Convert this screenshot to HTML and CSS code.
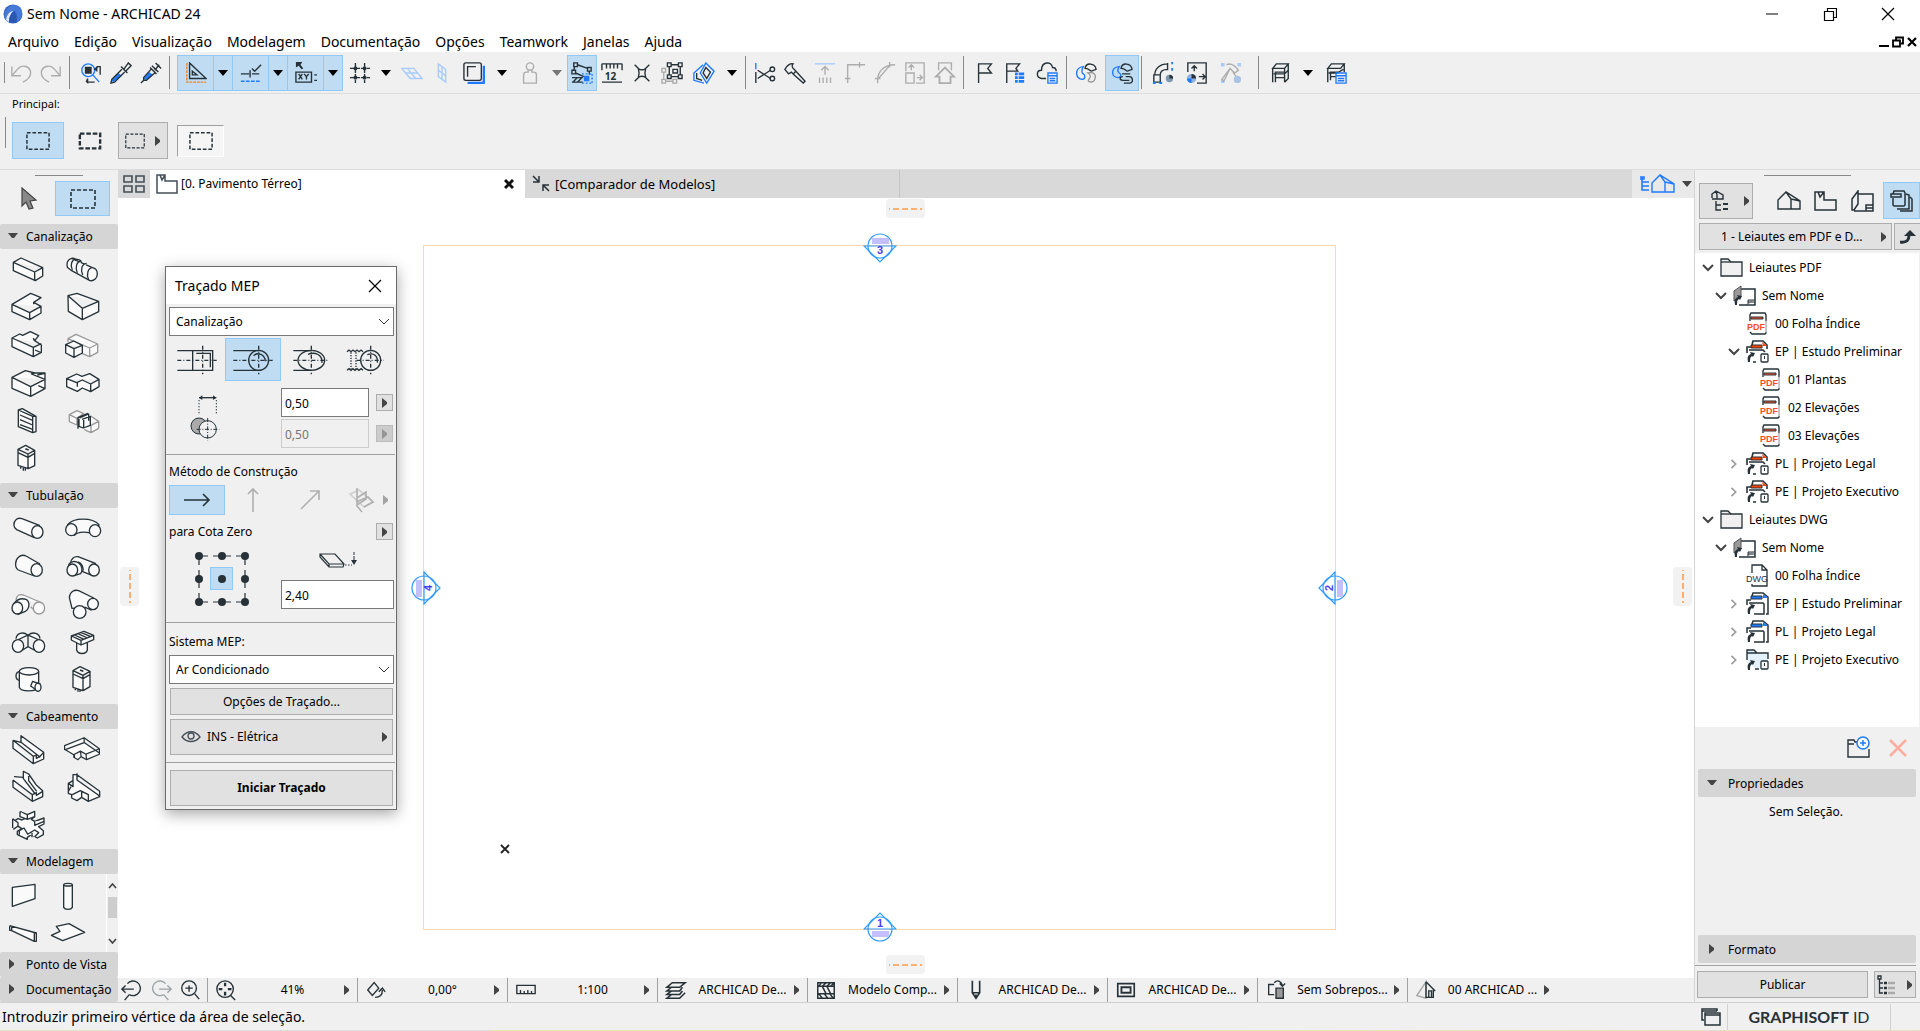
FILE: index.html
```html
<!DOCTYPE html>
<html lang="pt-BR">
<head>
<meta charset="utf-8">
<title>Sem Nome - ARCHICAD 24</title>
<link rel="stylesheet" href="styles.css">
</head>
<body>
<svg class="defs" aria-hidden="true">
  <defs>
    <symbol id="caret" viewBox="0 0 10 6"><path d="M0 0h10L5 6z" fill="currentColor"/></symbol>
    <symbol id="tri" viewBox="0 0 6 10"><path d="M0 0v10l5-4V4z" fill="#444"/></symbol>
    <symbol id="tri-down" viewBox="0 0 10 6"><path d="M0 0h10L6 5H4z" fill="#444"/></symbol>
    <symbol id="marquee" viewBox="0 0 26 20"><path d="M1 1h24v18H1z" fill="none" stroke="#263238" stroke-width="1.600" stroke-dasharray="4 2"/></symbol>
    <symbol id="chev-down" viewBox="0 0 12 8"><path d="M1 1l5 5 5-5" fill="none" stroke="#444" stroke-width="2"/></symbol>
    <symbol id="chev-right" viewBox="0 0 8 12"><path d="M1 1l5 5-5 5" fill="none" stroke="#9a9a9a" stroke-width="2"/></symbol>
    <symbol id="house" viewBox="0 0 24 20"><path d="M1 18V9l8-8 14 9v8zM9 1l5 7v10M14 8l9 2" fill="none" stroke="currentColor" stroke-width="1.400"/></symbol>
    <symbol id="folder" viewBox="0 0 24 20"><path d="M1 18V1h7l3 3h11v14z" fill="#f0f0f0" stroke="#263238" stroke-width="1.300"/><path d="M1 4h10" stroke="#263238" stroke-width="1.300"/></symbol>
    <symbol id="layout-book" viewBox="0 0 24 22"><path d="M8 4h14v16H6" fill="none" stroke="#263238" stroke-width="1.500"/><path d="M1 6l7-5v11l-7 4z" fill="#999" stroke="#555"/><path d="M15 20v-5h7M15 17h7" fill="#ccc" stroke="#263238"/><path d="M2 20c-1-5 0-7 3-8l-1-2 5 1-2 4-1-1c-2 1-2 3-2 6z" fill="#263238"/></symbol>
    <symbol id="pdf" viewBox="0 0 24 24"><path d="M4 9V3l1-2h14l1 2v6M20 20v1l-1 1H6l-2-2" fill="none" stroke="#263238" stroke-width="1.400"/><path d="M20 8v13" stroke="#8a9094"/><path d="M5 5h12v2H5z" fill="#fc4c26" stroke="#263238"/><text x="1" y="18" class="ico-text" fill="#fc4c26">PDF</text></symbol>
    <symbol id="dwg" viewBox="0 0 24 24"><path d="M6 9V1h10l5 5v16H6v-2M16 1v5h5" fill="none" stroke="#263238" stroke-width="1.300"/><text x="0" y="18" class="ico-text ico-dwg" fill="#263238">DWG</text></symbol>
    <symbol id="pub-pdf" viewBox="0 0 24 24"><path d="M6 5l1-4h10l4 4v4M1 13V7h4M3 10h14l2 2M10 22h-3" fill="none" stroke="#263238" stroke-width="1.600"/><path d="M5 5h11v3H5z" fill="#fc4000" stroke="#263238"/><path d="M16 2l5 4h-4z" fill="#fc4000"/><rect x="15" y="14" width="7" height="8" rx="1" fill="#fff" stroke="#263238" stroke-width="1.300"/><path d="M18.500 16v3" stroke="#263238"/><path d="M2 22c-1-5 0-7 3-8l-1-2 5 1-2 4-1-1c-2 1-2 3-2 6z" fill="#263238"/></symbol>
    <symbol id="pub-dwg" viewBox="0 0 24 24"><path d="M6 4l1-3h10l5 4v17h-2M1 13V8h4M3 11h14l1 1v10H8" fill="none" stroke="#263238" stroke-width="1.500"/><path d="M5 4h11v3H5z" fill="#1e7bff" stroke="#263238"/><path d="M17 2l4 3v1h-4z" fill="#1e7bff"/><path d="M2 22c-1-5 0-7 3-8l-1-2 5 1-2 4-1-1c-2 1-2 3-2 6z" fill="#263238"/></symbol>
    <symbol id="pub-folder" viewBox="0 0 24 24"><path d="M1 14V2h7l3 3h11v9l-8 6H9z" fill="#e3f1fd"/><path d="M1 12V2h7l3 3h11v6M9 21h4M1 5h10" fill="none" stroke="#263238" stroke-width="1.400"/><rect x="15" y="13" width="7" height="8" rx="1" fill="#fff" stroke="#263238" stroke-width="1.300"/><path d="M18.500 15v3" stroke="#263238"/><path d="M2 22c-1-5 0-7 3-8l-1-2 5 1-2 4-1-1c-2 1-2 3-2 6z" fill="#263238"/></symbol>
  </defs>
</svg>

<header class="titlebar">
  <svg class="logo" viewBox="0 0 20 20"><circle cx="10" cy="10" r="9.500" fill="#2f62c4"/><path d="M1 13C1 6 6 1 11 1c6 0 8 4 8 8 0 4-2 7-5 9 1-7-1-11-3-11-4 0-7 5-8 9z" fill="#4779d6"/><path d="M3 16c1-6 4-9 8-9-3 2-5 6-5 11z" fill="#dfe9fb"/><path d="M6 18c0-5 2-9 5-11 2 2 3 6 2 11-2 1-5 1-7 0z" fill="#2a57b0"/></svg>
  <span class="title">Sem Nome - ARCHICAD 24</span>
  <div class="winctl">
    <button aria-label="Minimizar"><svg width="14" height="14"><path d="M1 7h12" stroke="#000"/></svg></button>
    <button aria-label="Restaurar"><svg width="14" height="14"><path d="M1.500 4.500h9v9h-9zM4.500 4V1.500h9v9H11" fill="none" stroke="#000" stroke-width="1.200"/></svg></button>
    <button aria-label="Fechar"><svg width="14" height="14"><path d="M1 1l12 12M13 1L1 13" stroke="#000" stroke-width="1.200"/></svg></button>
  </div>
</header>
<nav class="menubar">
  <a href="#">Arquivo</a><a href="#">Edição</a><a href="#">Visualização</a><a href="#">Modelagem</a><a href="#">Documentação</a><a href="#">Opções</a><a href="#">Teamwork</a><a href="#">Janelas</a><a href="#">Ajuda</a>
  <div class="docctl">
    <svg width="10" height="12"><path d="M0 10h10" stroke="#000" stroke-width="2"/></svg>
    <svg width="12" height="12"><path d="M1 4.500h7v6H1zM4 4V1.500h7v6H9" fill="none" stroke="#000" stroke-width="1.800"/></svg>
    <svg width="10" height="12"><path d="M1 2l8 8M9 2l-8 8" stroke="#000" stroke-width="2.200"/></svg>
  </div>
</nav>

<div class="toolbar">
  <i class="sep first"></i>
  <button class="tb dim" aria-label="Desfazer"><svg viewBox="0 0 24 24"><path d="M2 5v10h10M2 15L9 7c4-4 11-3 13 2 2 6-2 10-8 13"/></svg></button>
  <button class="tb dim" aria-label="Refazer"><svg viewBox="0 0 24 24"><path d="M22 5v10H12M22 15l-7-8C11 3 4 4 2 9c-2 6 2 10 8 13"/></svg></button>
  <i class="sep"></i>
  <button class="tb" aria-label="Localizar e selecionar"><svg viewBox="0 0 24 24"><circle cx="9" cy="9" r="7" class="b"/><path d="M14 14l7 8" class="b"/><path d="M6 6h6v6H6z" class="f"/><path d="M17 8l2-3h3v9M8 18v4h8"/><path d="M15 8l4-4v7zM6 21l3-3v6z" class="f" stroke="none"/></svg></button>
  <button class="tb" aria-label="Conta-gotas"><svg viewBox="0 0 24 24"><path d="M9 12L2 20l1 2 2-1 8-6z" class="bf"/><path d="M13 8L2 19l-1 4 4-1L16 11M12 5l7 7M15 8l5-7 3 3-6 6z"/></svg></button>
  <button class="tb" aria-label="Seringa"><svg viewBox="0 0 24 24"><path d="M10 11l-6 7 2 2 8-6z" class="bf"/><path d="M12 8L4 17v3h3l9-8M1 23l4-4M11 6l7 7M16 9l5-6M17 1l6 6M13 4l7 7"/></svg></button>
  <i class="sep"></i>
  <div class="toggles">
    <button class="on" aria-label="Linhas guia"><svg viewBox="0 0 24 24"><path d="M5 1v17h18z M8 10v4h5z"/><path d="M2 1v21h21" stroke="#f58220" stroke-dasharray="3 1"/></svg></button><button class="on car" aria-label="Opções"><svg class="caret"><use href="#caret"/></svg></button>
    <button class="on" aria-label="Guias de ajuste"><svg viewBox="0 0 24 24"><path d="M1 13h9M13 13h8M11 9v8M13 7l3 3 7-7"/><path d="M1 21h22" class="b" stroke-dasharray="4 1.500"/></svg></button><button class="on car" aria-label="Opções"><svg class="caret"><use href="#caret"/></svg></button>
    <button class="on" aria-label="Coordenadas"><svg viewBox="0 0 24 24"><path d="M1 0h7L6 3l3 4-2 1-3-4-3 2z" class="f" stroke="none"/><path d="M1 11h17v11H1zM21 14h3M21 20h3"/><path d="M4 13l4 6M8 13l-4 6M10 13l2.500 3 2.500-3M12.500 16v3"/></svg></button><button class="on car" aria-label="Opções"><svg class="caret"><use href="#caret"/></svg></button>
  </div>
  <button class="tb" aria-label="Grade"><svg viewBox="0 0 24 24"><path d="M7 1v22M17 1v22M1 7h22M1 17h22" stroke-dasharray="5 1"/><path d="M6 6h2v2H6zM16 6h2v2h-2zM6 16h2v2H6zM16 16h2v2h-2z" class="f"/></svg></button>
  <button class="car" aria-label="Opções da grade"><svg class="caret"><use href="#caret"/></svg></button>
  <button class="tb pale" aria-label="Plano de edição"><svg viewBox="0 0 24 24"><path d="M1 7h13l9 11H10zM7 7l9 11M5 12h13"/></svg></button>
  <button class="tb pale" aria-label="Plano vertical"><svg viewBox="0 0 24 24"><path d="M8 2l8 6v14l-8-6zM12 5v14M8 9l8 6"/></svg></button>
  <button class="tb wide" aria-label="Rastrear"><svg viewBox="0 0 24 24"><path d="M5 23h16a2 2 0 002-2V4" class="b w"/><rect x="1" y="1" width="19" height="19" rx="2"/><path d="M5 16V5h9"/></svg></button>
  <button class="car" aria-label="Opções de rastreio"><svg class="caret"><use href="#caret"/></svg></button>
  <button class="tb wide dim" aria-label="Gravidade"><svg viewBox="0 0 24 24"><circle cx="12" cy="5" r="4"/><path d="M10 9v2H8c-2 0-3 1-3 3v9h14v-9c0-2-1-3-3-3h-2V9"/></svg></button>
  <button class="car gray" aria-label="Opções de gravidade"><svg class="caret"><use href="#caret"/></svg></button>
  <button class="tb on" aria-label="Suspender grupos"><svg viewBox="0 0 24 24"><path d="M3 1h4v4H3zM18 6h4v4h-4zM1 9h4v4H1zM7 3l11 4M4 5L3 9M5 12l9 4M20 10v4M1 17h12M1 22h12M2 22l5-5M7 22l5-5"/><path d="M14 15h6v6h-6z" class="bf"/><path d="M12 13h11M23 13v10M12 23h11" class="b" stroke-dasharray="2 2"/></svg></button>
  <button class="tb" aria-label="Medir"><svg viewBox="0 0 24 24"><path d="M1 2h22M1 22h22M1 2v7M6 2v5M10 2v5M14 2v5M18 2v5M23 2v7"/><text x="4" y="20" class="num">12</text></svg></button>
  <button class="tb" aria-label="Interseção"><svg viewBox="0 0 24 24"><path d="M4 3l5 5M20 3l-5 5M4 21l5-5M20 21l-5-5M8 7c2 2 6 2 8 0-1 3-1 7 0 10-2-2-6-2-8 0 1-3 1-7 0-10z"/></svg></button>
  <button class="tb" aria-label="Editar grupo"><svg viewBox="0 0 24 24"><path d="M3 11v7M5 21h8M1 7h4v4H1zM1 19h4v4H1zM13 19h4v4h-4z" stroke="#aaa"/><path d="M7 1h4v4H7zM19 1h4v4h-4zM7 14h4v4H7zM19 14h4v4h-4zM11 3h8M9 5v9M21 5v9M11 16h8M13 8h5v4h-5z"/></svg></button>
  <button class="tb wide" aria-label="Plano de corte"><svg viewBox="0 0 24 24"><path d="M11 3L1 12v8l11 3M14 1l9 9-8 13-7-11z" class="b"/><path d="M14 6l5 5-4 7-4-6zM4 12v6l6 2"/></svg></button>
  <button class="car" aria-label="Opções do plano"><svg class="caret"><use href="#caret"/></svg></button>
  <i class="sep tight"></i>
  <button class="tb" aria-label="Dividir"><svg viewBox="0 0 24 24"><path d="M2 1v7" class="b"/><path d="M2 11v12M4 9l14 9M4 18l14-9"/><circle cx="20" cy="8" r="2.500"/><circle cx="20" cy="18" r="2.500"/></svg></button>
  <button class="tb" aria-label="Ajustar"><svg viewBox="0 0 24 24"><path d="M1 8c2-4 6-7 9-6-2 2-1 4 1 6l2 2-3 3-2-2-3 2zM13 10l10 11-2 2-11-10"/></svg></button>
  <button class="tb dim" aria-label="Elevar"><svg viewBox="0 0 24 24"><path d="M1 2h22" stroke="#a9cbfa"/><path d="M12 14V5M8 9l4-4 4 4M6 17v6M10 17v6M14 17v6M18 17v6"/></svg></button>
  <button class="tb dim" aria-label="Concordar"><svg viewBox="0 0 24 24"><path d="M4 23V3h19M17 0v6M1 18h6"/></svg></button>
  <button class="tb dim" aria-label="Arco"><svg viewBox="0 0 24 24"><path d="M4 23C3 12 9 3 23 3M5 18L17 4M17 0v6M1 18h6"/></svg></button>
  <button class="tb dim" aria-label="Redimensionar"><svg viewBox="0 0 24 24"><path d="M2 10V1h20v22H13M2 12h9v11H2zM8 9V4M5 6l3-3 3 3M14 17h6M17 14l3 3-3 3"/></svg></button>
  <button class="tb dim" aria-label="Recortar ao telhado"><svg viewBox="0 0 24 24"><path d="M2 16L12 6l10 10h-4v7H6v-7z" stroke-width="2"/><path d="M5 9V1h14v8"/></svg></button>
  <i class="sep"></i>
  <button class="tb" aria-label="Marcador"><svg viewBox="0 0 24 24"><path d="M5 23V2h14l-4 5 4 5H5"/></svg></button>
  <button class="tb" aria-label="Lista de marcadores"><svg viewBox="0 0 24 24"><path d="M3 23V2h14l-4 5 2 3H3"/><path d="M12 13h10M12 17h10M12 21h10" class="b w" stroke-dasharray="3 1 7 0"/></svg></button>
  <button class="tb wide" aria-label="BIMcloud"><svg viewBox="0 0 24 24"><path d="M11 18H6c-6-1-6-9 0-9C6-1 17-1 18 6c3 0 4 2 4 4"/><path d="M13 12h10v11H13zM13 15h10M15 18h6M15 20.500h6" class="b"/></svg></button>
  <i class="sep tight"></i>
  <button class="tb" aria-label="Modelo MEP"><svg viewBox="0 0 24 24"><path d="M9 5c-10 1-9 14-1 14 4-1 3-5 1-6-3-2 0-8 0-8z" class="b"/><path d="M11 7c1-7 11-6 12 1l-5 2c-2 0-2-3-7-3z"/><path d="M14 12c7-2 10 3 7 8-2 3-8 2-6-1 2-2 3-5-1-7z" stroke="#999"/></svg></button>
  <button class="tb wide on lead" aria-label="Rotas MEP"><svg viewBox="0 0 24 24"><path d="M9 5C-1 6 0 17 8 17c4-1 3-4 1-5-3-2 0-7 0-7z" class="b"/><path d="M11 7c1-7 11-6 12 1l-5 2c-2 0-2-3-7-3zM12 13h9M13 16c-4 0-4 4 0 4h7M14 23h6c5 0 4-7 0-7h-4"/></svg></button>
  <i class="sep tight"></i>
  <button class="tb wide" aria-label="Curva MEP"><svg viewBox="0 0 24 24"><path d="M3 14C3 7 9 2 17 2M9 14c0-4 3-6 8-6M2 14h7v8H2zM17 1v8"/><path d="M21 1h2M21 8h2M1 23h3M8 23h3" class="b w"/><circle cx="19" cy="18" r="4" fill="#7f98ad" stroke="none"/><path d="M19 14a4 4 0 014 4h-4z" class="f" stroke="none"/></svg></button>
  <button class="tb wide" aria-label="Redimensionar MEP"><svg viewBox="0 0 24 24"><path d="M2 11V1h20v22H12M9 10V4M6 7l3-3 3 3M14 16h7M18 13l3 3-3 3"/><circle cx="6" cy="18" r="5" fill="#8fb3dc" stroke="none"/><path d="M1 18a5 5 0 005 5v-5z" class="bf"/><path d="M6 13a5 5 0 015 5H6z" class="f" stroke="none"/></svg></button>
  <button class="tb wide dim" aria-label="Reparar MEP"><svg viewBox="0 0 24 24"><path d="M1 1h4v4H1zM19 1h4v4h-4zM1 19h4v4H1z" fill="#a9cbfa" stroke="none"/><path d="M7 3c4-2 8-1 13 6l-4 3-5-5L4 21l-2-2L11 7M14 11l6 8"/><circle cx="19" cy="19" r="4" fill="#a9c3e6" stroke="none"/></svg></button>
  <i class="sep loose"></i>
  <button class="tb wide" aria-label="Biblioteca"><svg viewBox="0 0 24 24"><path d="M4 7l4-5h13l-4 5zM4 7v15M7 22V11h10v11M17 7v4M21 2v16l-4 4M5 13h12l4-4M7 17h10"/></svg></button>
  <button class="car" aria-label="Opções da biblioteca"><svg class="caret"><use href="#caret"/></svg></button>
  <button class="tb wide" aria-label="Lista da biblioteca"><svg viewBox="0 0 24 24"><path d="M3 7l4-5h14l-4 5zM3 7v15M6 20V11h8M21 2v9M4 12h9l7-4M6 16h6"/><path d="M12 12h11v11H12zM12 15h11M14 18h7M14 20.500h7" class="b"/></svg></button>
</div>

<section class="infobox">
  <p>Principal:</p>
  <div class="inforow">
    <i class="sep"></i>
    <button class="ib on" aria-label="Marquise simples"><svg><use href="#marquee"/></svg></button>
    <button class="ib bold" aria-label="Marquise espessa"><svg viewBox="0 0 26 20"><path d="M2 2h22v16H2z" fill="none" stroke="#263238" stroke-width="2.600" stroke-dasharray="5 2"/></svg></button>
    <button class="ib raised" aria-label="Método"><svg class="sm"><use href="#marquee"/></svg><svg class="tri"><use href="#tri"/></svg></button>
    <button class="ib inset" aria-label="Geometria"><svg><use href="#marquee"/></svg></button>
  </div>
</section>

<div class="work">
  <aside class="toolbox">
    <i class="grip"></i>
    <div class="pick">
      <button aria-label="Seta"><svg width="18" height="24" viewBox="0 0 18 24"><path d="M2 1l14 12-6 1 3 7-4 1-3-7-4 4z" fill="#888" stroke="#444" stroke-width="1.200"/></svg></button>
      <button class="on" aria-label="Marquise"><svg width="26" height="20"><use href="#marquee"/></svg></button>
    </div>
    <h2><svg class="td"><use href="#tri-down"/></svg>Canalização</h2>
    <div class="tools">
      <button aria-label="Duto"><svg viewBox="30 279 108 96"><path d="M40 307l23-13 65 29v25l-22 14-66-30zM40 307l64 29 24-13M104 336v26"/></svg></button>
      <button aria-label="Duto flexível"><svg viewBox="192 279 108 96"><path d="M215 295c-12 3-17 15-13 27l13 10 55 30c12 2 22-8 22-20 0-10-5-17-15-19z"/><path d="M229 297c-15 2-19 19-12 33M244 303c-15 2-19 19-12 35M260 310c-15 2-19 19-12 35M278 323c-14 0-20 20-12 37M215 295c9-1 12 2 14 8M229 298c9 0 13 2 15 8"/></svg></button>
      <button aria-label="Curva de duto"><svg viewBox="30 393 108 96"><path d="M36 433l56-33 31 13-22 14 22 12v20l-34 20-53-24zM36 433l53 25 34-19M89 458v21M101 427v6"/></svg></button>
      <button aria-label="Transição"><svg viewBox="192 393 108 96"><path d="M204 407l27-7 65 24v31l-49 24-42-25zM204 407l43 38 49-21M247 445v34"/></svg></button>
      <button aria-label="Derivação"><svg viewBox="30 507 108 96"><path d="M36 534l23-12 9 4 23-11 25 12-12 15 20 13v22l-24 13-64-30zM36 534l64 28 24-11M100 562v28M105 570l18 8M100 534l3 8"/></svg></button>
      <button aria-label="Ramal"><svg viewBox="192 507 108 96"><path d="M204 536l24-13 65 29v25l-24 13-24-10M269 590v-26l24-12M269 564l-65-28v10" stroke="#999"/><path d="M197 554l24-11 26 13v23l-25 13-25-13zM197 554l25 12 25-10M222 566v26"/></svg></button>
      <button aria-label="Bifurcação"><svg viewBox="30 621 108 96"><path d="M36 652l40-20 28 7h31v47l-43 23-56-24zM36 652l56 28 43-22M92 680v29M104 639l-10 3 41 16M112 645l23-5M135 686l-20-9"/></svg></button>
      <button aria-label="Desvio"><svg viewBox="192 621 108 96"><path d="M200 656l30-14 16 7 23-8 28 17v22l-25 15-25-11-15 10-32-14zM200 656l30 12 17-8 25 12 25-14M272 672v25M232 668v12"/></svg></button>
      <button aria-label="Terminal"><svg viewBox="30 735 108 96"><path d="M55 750l12-4 41 23v46l-10 3-43-18zM55 750l43 19 10 0M98 769v49M60 765l38 16M60 779l38 16M60 794l38 14"/></svg></button>
      <button aria-label="Acessório em linha"><svg viewBox="192 735 108 96"><path d="M208 764l23-12 20 9-20 14v20l-23-10zM208 764l23 11M272 768l24 16v21l-23 13-20-9M273 795v23M253 788l20 8 23-12" stroke="#999"/><path d="M234 806v-33l30-13M239 774l27-12v20M246 778l25-9v27l-21 8-13-5v-23M251 780v24" stroke-width="4"/></svg></button>
      <button aria-label="Equipamento"><svg viewBox="30 849 108 96"><path d="M54 868l23-12 27 15v46l-19 9-31-10zM54 868l30 14 20-11M84 882v43M54 878l30 14 20-12M62 918v8M70 922v10M76 924v8"/><path d="M76 866l10 4" stroke-width="5"/></svg></button>
    </div>
    <h2><svg class="td"><use href="#tri-down"/></svg>Tubulação</h2>
    <div class="tools">
      <button aria-label="Tubo"><svg viewBox="30 1056 108 96"><path d="M103 1133l-53-24c-10-6-12-21-2-30 6-6 12-5 18-3l54 21"/><ellipse cx="112" cy="1116" rx="17" ry="19"/></svg></button>
      <button aria-label="Curva de tubo"><svg viewBox="192 1056 108 96"><path d="M203 1094c18-22 74-22 94 0l-14 32c-15-13-50-13-60 0z"/><ellipse cx="214" cy="1109" rx="17" ry="18"/><ellipse cx="285" cy="1112" rx="17" ry="18"/></svg></button>
      <button aria-label="Redução"><svg viewBox="30 1170 108 96"><path d="M103 1248l-48-18c-12-8-10-30 1-39 7-6 16-6 22-3l42 24"/><ellipse cx="110" cy="1230" rx="17" ry="19"/></svg></button>
      <button aria-label="Derivação de tubo"><svg viewBox="192 1170 108 96"><path d="M212 1210c0-14 12-22 22-20l52 20-8 37-30-12c4-12-2-26-14-29"/><path d="M206 1215c5-12 20-13 30-6s13 22 6 32l-20 6z"/><ellipse cx="217" cy="1230" rx="16" ry="18"/><ellipse cx="282" cy="1230" rx="16" ry="18"/></svg></button>
      <button aria-label="Ramal de tubo"><svg viewBox="30 -6 108 96"><path d="M48 30c2-14 10-19 22-15l50 21M92 50l22 21" stroke="#999"/><ellipse cx="117" cy="54" rx="17" ry="18" stroke="#999"/><path d="M44 38c10-12 24-13 34-10 12 6 12 28-2 36l-22 9z"/><ellipse cx="52" cy="54" rx="16" ry="18"/></svg></button>
      <button aria-label="Bifurcação de tubo"><svg viewBox="192 -6 108 96"><path d="M216 55l-8-33c2-18 16-24 28-20l45 22-8 36-17-8z"/><ellipse cx="279" cy="42" rx="16" ry="17"/><ellipse cx="239" cy="66" rx="19" ry="19"/></svg></button>
      <button aria-label="Cruzeta"><svg viewBox="30 108 108 96"><path d="M48 146c2-16 20-23 36-10 16-13 34-6 36 10M84 136v34M52 150l30-14M118 150l-32-14M68 180l16-10 18 10"/><ellipse cx="54" cy="168" rx="17" ry="19"/><ellipse cx="117" cy="168" rx="17" ry="19"/></svg></button>
      <button aria-label="Ralo"><svg viewBox="192 108 108 96"><path d="M230 158v22c4 14 28 14 32 0v-22z"/><path d="M214 138l38-14 29 12v13l-38 16-29-15zM214 138l29 13 38-15M243 151v14M224 135l28 13M234 131l28 13M244 128l28 12"/></svg></button>
      <button aria-label="Tanque"><svg viewBox="30 222 108 96"><path d="M60 244c-15 2-17 24 0 28"/><path d="M58 244v48c4 14 52 14 58 0v-48"/><ellipse cx="87" cy="244" rx="29" ry="11"/><path d="M92 288l6-14 22 8-6 22z"/><ellipse cx="114" cy="292" rx="9" ry="12"/></svg></button>
      <button aria-label="Equipamento hidráulico"><svg viewBox="192 222 108 96"><path d="M219 242l21-12 30 14v46l-21 12-30-10zM219 242l30 14 21-12M249 256v46M219 252l30 14 21-12M226 293v8M234 297v8M240 298v8"/><path d="M240 240l10 4" stroke-width="5"/></svg></button>
    </div>
    <h2><svg class="td"><use href="#tri-down"/></svg>Cabeamento</h2>
    <div class="tools">
      <button aria-label="Eletrocalha"><svg viewBox="30 429 108 96"><path d="M39 451v24l61 46 31-14v-20l-68-50v20l-24-6M39 451l61 48v22M63 457l58 45M100 499l9-4v10l12-7 10-11"/></svg></button>
      <button aria-label="Curva de eletrocalha"><svg viewBox="188 429 118 96"><path d="M190 466l64-26 50 36v18l-42 18-18-10-10 10-14-8v-8l-30-18zM190 466v14M254 440v16l50 34M190 480l64-24M304 476l-44 18-18-10-20 10v10M244 502l-2-18M262 512l-2-18"/></svg></button>
      <button aria-label="Redução de eletrocalha"><svg viewBox="30 543 108 96"><path d="M39 570v22l58 42 31-14v-18l-20-18-22-32-16-8v18l-28-2M39 570l58 44v20M70 552v14l36 46M86 558v14l24 32M97 614l12-6v8l19-12"/></svg></button>
      <button aria-label="Derivação de eletrocalha"><svg viewBox="192 543 108 96"><path d="M205 580l14-8v-18h12l68 50v16l-34 14-20-12-14 10-16-8v-10l-10-4zM231 550v20l68 48M205 580l14 10v-18M217 614l24-12 24 12v20M245 604v18M213 590l-8 14"/></svg></button>
      <button aria-label="Cruzeta de eletrocalha"><svg viewBox="30 657 108 96"><path d="M38 696l16-10 12 4 8-4-10-8V666l18 8 22-10v16l-10 8 10 6 28-10v18l-16 8 14 12v12l-18 10-18-10-12 8v6l-30-14v-10l14-8-20-12z"/><path d="M82 674v14l22-8M64 666l-4 0v14l22 8M104 694l0 12 28-12M38 686v28M38 686l16 12v10l-14 10M58 734l0-12 14-8 12 20M84 732l20-12 12 8-12 12M96 728v14"/></svg></button>
    </div>
    <h2><svg class="td"><use href="#tri-down"/></svg>Modelagem</h2>
    <div class="scroller">
      <div class="tools small">
        <button aria-label="Parede"><svg viewBox="17 865 108 96"><path d="M36 893l68-9v43l-68 23z"/></svg></button>
        <button aria-label="Pilar"><svg viewBox="152 865 108 96"><path d="M190 885v68c4 8 22 8 26 0v-68"/><ellipse cx="203" cy="885" rx="13" ry="4"/></svg></button>
        <button aria-label="Viga"><svg viewBox="17 979 108 96"><path d="M28 1008l80 22v25h-6l-68-32v-14M28 1008v14h6M102 1030v25"/></svg></button>
        <button aria-label="Laje"><svg viewBox="152 979 108 96"><path d="M168 1010l38-8 47 26-66 25-34-16 26-12z"/></svg></button>
      </div>
      <div class="vscroll"><svg width="9" height="6"><path d="M1 5l3.500-4L8 5" fill="none" stroke="#444" stroke-width="1.600"/></svg><i></i><svg width="9" height="6"><path d="M1 1l3.500 4L8 1" fill="none" stroke="#444" stroke-width="1.600"/></svg></div>
    </div>
    <h2><svg class="tri"><use href="#tri"/></svg>Ponto de Vista</h2>
    <h2><svg class="tri"><use href="#tri"/></svg>Documentação</h2>
  </aside>

  <main class="center">
    <div class="tabs">
      <button class="overview" aria-label="Visão geral das abas"><svg width="22" height="18"><path d="M1 1h8v6H1zM13 1h8v6h-8zM1 11h8v6H1zM13 11h8v6h-8z" fill="none" stroke="#444f57" stroke-width="1.600"/></svg></button>
      <div class="tab active"><svg width="22" height="20"><path d="M1 1h8v6h12v12H1zM4 1l2 5 3-5" fill="none" stroke="#444f57" stroke-width="1.500"/></svg><span>[0. Pavimento Térreo]</span><button aria-label="Fechar aba"><svg width="10" height="10"><path d="M1 1l8 8M9 1L1 9" stroke="#111" stroke-width="3"/></svg></button></div>
      <div class="tab"><svg width="20" height="20"><path d="M2 2l6 6M8 2v6H2M18 17l-6-6M12 17v-6h6" fill="none" stroke="#263238" stroke-width="1.500"/></svg><span>[Comparador de Modelos]</span></div>
      <button class="navtab" aria-label="Mapa de vistas"><svg width="10" height="16"><path d="M2 1v13h7M2 6h7M2 10h7M0 1h4v2H0" fill="none" stroke="#1e7bff" stroke-width="1.600"/></svg><svg class="blue" width="24" height="20"><use href="#house"/></svg><svg class="caret"><use href="#caret"/></svg></button>
    </div>
    <div class="canvas">
      <i class="dock top"></i><i class="dock bottom"></i><i class="dock left"></i><i class="dock right"></i>
      <div class="frame">
        <svg class="mk mt" viewBox="0 0 34 34"><path d="M1 17h32L17 33z"/><circle cx="17" cy="17" r="12"/><path d="M9 9h17v6H9z" class="v"/><text x="17" y="25">3</text></svg>
        <svg class="mk mb" viewBox="0 0 34 34"><path d="M1 17h32L17 1z"/><circle cx="17" cy="17" r="12"/><path d="M9 19h17v6H9z" class="v"/><text x="17" y="15">1</text></svg>
        <svg class="mk ml" viewBox="0 0 34 34"><path d="M17 1v32l16-16z"/><circle cx="17" cy="17" r="12"/><path d="M9 9h6v17H9z" class="v"/><text x="0" y="0" transform="translate(25 17) rotate(-90)">4</text></svg>
        <svg class="mk mr" viewBox="0 0 34 34"><path d="M17 1v32L1 17z"/><circle cx="17" cy="17" r="12"/><path d="M19 9h6v17h-6z" class="v"/><text x="0" y="0" transform="translate(15 17) rotate(-90)">2</text></svg>
        <svg class="origin" viewBox="0 0 10 10"><path d="M1 1l8 8M9 1L1 9"/></svg>
      </div>

      <form class="dialog">
        <div class="dhead"><span>Traçado MEP</span><button type="button" aria-label="Fechar"><svg width="14" height="14"><path d="M1 1l12 12M13 1L1 13" stroke="#000" stroke-width="1.200"/></svg></button></div>
        <div class="select"><select aria-label="Tipo de rota"><option>Canalização</option></select><svg width="10" height="6"><path d="M0 0l5 5 5-5" fill="none" stroke="#333"/></svg></div>
        <div class="shapes">
          <button type="button" aria-label="Retangular"><svg viewBox="57 249 168 129"><path d="M82 287h106v59H82M128 287v59M139 295h42v42"/><path d="M82 316h118M158 272v86" stroke-dasharray="12 6 3 6"/></svg></button>
          <button type="button" class="on" aria-label="Circular"><svg viewBox="225 249 168 129"><path d="M250 287h76M250 346h76"/><circle cx="326" cy="316" r="30"/><path d="M311 302c12-12 34-4 35 17"/><path d="M250 316h118M326 272v86" stroke-dasharray="12 6 3 6"/></svg></button>
          <button type="button" aria-label="Oval"><svg viewBox="393 249 168 129"><path d="M430 287h54M430 346h54"/><ellipse cx="484" cy="316" rx="40" ry="30"/><path d="M474 298c22-9 44 2 42 26"/><path d="M430 316h107M484 272v86" stroke-dasharray="12 6 3 6"/></svg></button>
          <button type="button" aria-label="Flexível"><svg viewBox="561 249 168 129"><path d="M591 290l6-5 6 5 6-5 6 5 6-5 6 5 6-5 6 5M591 346l6-5 6 5 6-5 6 5 6-5 6 5 6-5 6 5"/><path d="M603 292v50M618 292v50" stroke-dasharray="4 4"/><circle cx="662" cy="316" r="30"/><path d="M652 299c20-8 32 4 30 24"/><path d="M620 316h82M662 272v86" stroke-dasharray="12 6 3 6"/></svg></button>
        </div>
        <div class="size">
          <svg class="diam" viewBox="118 410 90 150"><path d="M145 427h52" stroke-width="4"/><path d="M145 427l10-7v14zM197 427l-10-7v14z" fill="#263238" stroke="none"/><path d="M145 434v44M197 434v44" stroke-dasharray="4 5"/><circle cx="145" cy="512" r="24" fill="#aaa"/><circle cx="171" cy="522" r="26" fill="#f0f0f0"/><path d="M138 522h68M171 488v68" stroke-dasharray="12 5 3 5"/></svg>
          <div class="fields">
            <div><input aria-label="Largura" value="0,50"><button type="button" class="mini" aria-label="Valores"><svg class="tri"><use href="#tri"/></svg></button></div>
            <div class="off"><input aria-label="Altura" value="0,50" disabled><button type="button" class="mini" aria-label="Valores" disabled><svg class="tri"><use href="#tri"/></svg></button></div>
          </div>
        </div>
        <hr>
        <p class="lbl method">Método de Construção</p>
        <div class="dirs">
          <button type="button" class="on" aria-label="Horizontal"><svg viewBox="0 0 28 28"><path d="M1 14h25M20 8l6 6-6 6" stroke="#263238"/></svg></button>
          <button type="button" aria-label="Vertical"><svg viewBox="0 0 28 28"><path d="M14 26V3M9 8l5-5 5 5"/></svg></button>
          <button type="button" aria-label="Inclinado"><svg viewBox="0 0 28 28"><path d="M6 23L24 5M15 5h9v9"/></svg></button>
          <button type="button" class="last" aria-label="Plano de trabalho"><svg viewBox="0 0 28 28"><path d="M2 8l9-4 14 12-9 5z" opacity=".5"/><path d="M9 2v18l5 6M9 12l9-6v7l-9 6M8 16l12-5 5 5-9 5"/></svg><svg class="tri"><use href="#tri"/></svg></button>
        </div>
        <div class="cota"><span>para Cota Zero</span><button type="button" class="mini" aria-label="Referência de cota"><svg class="tri"><use href="#tri"/></svg></button></div>
        <div class="anchor">
          <div class="anchorgrid">
            <input type="radio" name="a" aria-label="Superior esquerdo"><input type="radio" name="a" aria-label="Superior"><input type="radio" name="a" aria-label="Superior direito"><input type="radio" name="a" aria-label="Esquerdo"><input type="radio" name="a" aria-label="Centro" checked><input type="radio" name="a" aria-label="Direito"><input type="radio" name="a" aria-label="Inferior esquerdo"><input type="radio" name="a" aria-label="Inferior"><input type="radio" name="a" aria-label="Inferior direito">
            <svg viewBox="0 0 69 69"><path d="M12 12h46v46H12z" fill="none" stroke="#263238" stroke-width="1.200" stroke-dasharray="9 5 9 0"/><g fill="#263238"><circle cx="12" cy="12" r="4"/><circle cx="35" cy="12" r="4"/><circle cx="58" cy="12" r="4"/><circle cx="12" cy="35" r="4"/><circle cx="35" cy="35" r="4"/><circle cx="58" cy="35" r="4"/><circle cx="12" cy="58" r="4"/><circle cx="35" cy="58" r="4"/><circle cx="58" cy="58" r="4"/></g></svg>
          </div>
          <div class="elev">
            <svg viewBox="0 0 40 18"><path d="M2 2h15l9 10-1 3H11L2 5zM2 2l9 10h15M11 12v3" fill="none" stroke="#263238" stroke-width="1.200"/><path d="M27 13h7" stroke="#263238" stroke-dasharray="1.500 1.500"/><path d="M36 0v11" stroke="#263238" stroke-dasharray="3 1 9"/><path d="M33 8h6l-3 5z" fill="#263238"/></svg>
            <input aria-label="Elevação" value="2,40">
          </div>
        </div>
        <hr>
        <label class="lbl sys" for="sys">Sistema MEP:</label>
        <div class="select"><select id="sys"><option>Ar Condicionado</option></select><svg width="10" height="6"><path d="M0 0l5 5 5-5" fill="none" stroke="#333"/></svg></div>
        <button type="button" class="push opts">Opções de Traçado...</button>
        <button type="button" class="push layer"><svg width="20" height="14" viewBox="0 0 20 14"><path d="M1 7c5-7 13-7 18 0-5 6-13 6-18 0z" fill="none" stroke="#444f57" stroke-width="1.300"/><circle cx="10" cy="6" r="3" fill="none" stroke="#444f57" stroke-width="1.300"/></svg><span>INS - Elétrica</span><svg class="tri"><use href="#tri"/></svg></button>
        <hr>
        <button type="button" class="push start">Iniciar Traçado</button>
      </form>
    </div>
    <div class="quick">
      <div class="zoomers">
        <svg viewBox="0 0 24 24"><path d="M7 5a8 8 0 11 2 12M9 17l-5 6M1 11h13M5 7l-4 4 4 4"/></svg>
        <svg viewBox="0 0 24 24" class="dimi"><path d="M17 5a8 8 0 10-2 12M15 17l5 6M23 11H10M19 7l4 4-4 4"/></svg>
        <svg viewBox="0 0 24 24"><circle cx="11" cy="10" r="8"/><path d="M17 16l5 6M11 7v7M7 10h8"/></svg>
      </div>
      <button><svg viewBox="0 0 24 24"><circle cx="11" cy="11" r="9"/><path d="M17 18l5 5"/><path d="M11 4v4M11 14v4M4 11h4M14 11h4" stroke-width="2.500"/></svg><span>41%</span><svg class="tri"><use href="#tri"/></svg></button>
      <button><svg viewBox="0 0 24 24"><path d="M3 12l7-8 5 6-7 8zM11 20c5 0 8-3 8-8M15 14l4-4 3 4"/></svg><span>0,00°</span><svg class="tri"><use href="#tri"/></svg></button>
      <button><svg viewBox="0 0 24 24"><path d="M2 7h20v9H2zM6 16v-4M10 16v-3M14 16v-4M18 16v-3"/></svg><span>1:100</span><svg class="tri"><use href="#tri"/></svg></button>
      <button><svg viewBox="0 0 24 24"><path d="M8 4h14l-6 5H2zM19 9l-3 4H2l5-4M19 13l-3 4H2l5-4M22 15l-6 6H2l5-4" stroke-width="1.700"/></svg><span>ARCHICAD De...</span><svg class="tri"><use href="#tri"/></svg></button>
      <button><svg viewBox="0 0 24 24"><path d="M3 4h18v17H3zM3 8h18M3 16h18M7 4l-3 4M12 4L8 8M17 4l-4 4M21 4l-4 4M8 21l-4-5M14 21l-4-5M20 21l-4-5M8 8l4 8M13 8l4 8" stroke-width="1.600"/></svg><span>Modelo Comp...</span><svg class="tri"><use href="#tri"/></svg></button>
      <button><svg viewBox="0 0 24 24"><path d="M8 2v13l4 6 4-6V2M8 15h8M12 17v4" stroke-width="1.800"/></svg><span>ARCHICAD De...</span><svg class="tri"><use href="#tri"/></svg></button>
      <button><svg viewBox="0 0 24 24"><path d="M3 5h18v14H3z" stroke-width="1.800"/><path d="M7 9h10v6H7z" stroke-width="2"/></svg><span>ARCHICAD De...</span><svg class="tri"><use href="#tri"/></svg></button>
      <button><svg viewBox="0 0 24 24"><path d="M10 17H4V6h6M10 4c4-4 8-1 9 3M16 5l3 3 3-3"/><path d="M12 10h8v11h-8z" fill="#999"/></svg><span>Sem Sobrepos...</span><svg class="tri"><use href="#tri"/></svg></button>
      <button><svg viewBox="0 0 24 24"><path d="M2 18L12 3v18z" stroke="#aaa"/><path d="M12 3v17h8v-9l2 2-10-10M15 20v-7h3v7"/></svg><span>00 ARCHICAD ...</span><svg class="tri"><use href="#tri"/></svg></button>
    </div>
  </main>

  <aside class="navigator">
    <i class="grip"></i>
    <div class="navmodes">
      <button class="raised" aria-label="Seletor de projeto"><svg width="20" height="22"><path d="M2 8V4l4-3 7 4v4H2M7 9V5L6 1M6 11v9h5M6 15h5" fill="none" stroke="#263238" stroke-width="1.400"/><path d="M13 14h5M13 19h5" stroke="#263238" stroke-width="2"/></svg><svg class="tri"><use href="#tri"/></svg></button>
      <button aria-label="Mapa do projeto"><svg width="24" height="20"><use href="#house"/></svg></button>
      <button aria-label="Mapa de vistas"><svg width="24" height="20"><path d="M1 1h9v8h12v10H1zM4 1l2 5 4-5" fill="none" stroke="#263238" stroke-width="1.500"/></svg></button>
      <button aria-label="Livro de leiautes"><svg width="24" height="22"><path d="M1 9l6-8v13l-4 6H1zM7 4h15v17H3M15 21v-6h7M15 18h7" fill="none" stroke="#263238" stroke-width="1.500"/></svg></button>
      <button class="on" aria-label="Conjuntos de publicação"><svg width="24" height="22"><path d="M3 4l1-3h10l1 2v12l-1 1H4l-1-1V8M1 4h10v3H1zM16 4l3 1v14H7M20 7l2 2v12H10" fill="none" stroke="#263238" stroke-width="1.500"/></svg></button>
    </div>
    <div class="navset">
      <button class="raised wide"><span>1 - Leiautes em PDF e D...</span><svg class="tri"><use href="#tri"/></svg></button>
      <button class="raised up" aria-label="Nível acima"><svg width="16" height="16"><path d="M0 13c7 1 9-2 9-7" fill="none" stroke="#263238" stroke-width="3"/><path d="M4 7l6-6 6 6z" fill="#263238"/></svg></button>
    </div>
    <ul class="tree">
      <li class="l0"><svg class="cd"><use href="#chev-down"/></svg><svg class="ti"><use href="#folder"/></svg>Leiautes PDF</li>
      <li class="l1"><svg class="cd"><use href="#chev-down"/></svg><svg class="ti"><use href="#layout-book"/></svg>Sem Nome</li>
      <li class="l2"><i class="cd"></i><svg class="ti"><use href="#pdf"/></svg>00 Folha Índice</li>
      <li class="l2"><svg class="cd"><use href="#chev-down"/></svg><svg class="ti"><use href="#pub-pdf"/></svg>EP | Estudo Preliminar</li>
      <li class="l3"><i class="cd"></i><svg class="ti"><use href="#pdf"/></svg>01 Plantas</li>
      <li class="l3"><i class="cd"></i><svg class="ti"><use href="#pdf"/></svg>02 Elevações</li>
      <li class="l3"><i class="cd"></i><svg class="ti"><use href="#pdf"/></svg>03 Elevações</li>
      <li class="l2"><svg class="cd"><use href="#chev-right"/></svg><svg class="ti"><use href="#pub-pdf"/></svg>PL | Projeto Legal</li>
      <li class="l2"><svg class="cd"><use href="#chev-right"/></svg><svg class="ti"><use href="#pub-pdf"/></svg>PE | Projeto Executivo</li>
      <li class="l0"><svg class="cd"><use href="#chev-down"/></svg><svg class="ti"><use href="#folder"/></svg>Leiautes DWG</li>
      <li class="l1"><svg class="cd"><use href="#chev-down"/></svg><svg class="ti"><use href="#layout-book"/></svg>Sem Nome</li>
      <li class="l2"><i class="cd"></i><svg class="ti"><use href="#dwg"/></svg>00 Folha Índice</li>
      <li class="l2"><svg class="cd"><use href="#chev-right"/></svg><svg class="ti"><use href="#pub-dwg"/></svg>EP | Estudo Preliminar</li>
      <li class="l2"><svg class="cd"><use href="#chev-right"/></svg><svg class="ti"><use href="#pub-dwg"/></svg>PL | Projeto Legal</li>
      <li class="l2"><svg class="cd"><use href="#chev-right"/></svg><svg class="ti"><use href="#pub-folder"/></svg>PE | Projeto Executivo</li>
    </ul>
    <div class="treebar">
      <button aria-label="Nova pasta"><svg width="24" height="24"><path d="M10 6H8L7 4H1v17h21v-8M1 8h6" fill="none" stroke="#263238" stroke-width="1.400"/><circle cx="16" cy="7" r="6" fill="#fff" stroke="#1e7bff" stroke-width="1.500"/><path d="M16 4v6M13 7h6" stroke="#1e7bff" stroke-width="1.500"/></svg></button>
      <button aria-label="Excluir"><svg width="18" height="18"><path d="M1 1l16 16M17 1L1 17" stroke="#fbae9d" stroke-width="2.500"/></svg></button>
    </div>
    <h2><svg class="td"><use href="#tri-down"/></svg>Propriedades</h2>
    <p class="empty">Sem Seleção.</p>
    <h2><svg class="tri"><use href="#tri"/></svg>Formato</h2>
    <div class="publish">
      <button class="raised wide">Publicar</button>
      <button class="raised scope" aria-label="Escopo da publicação"><svg width="20" height="20"><path d="M1 1h3v3H1zM2.500 4v14H6M2.500 8H6M2.500 13H6" fill="none" stroke="#263238" stroke-width="1.300"/><path d="M7 8h3M7 13h3M7 18h3" stroke="#263238" stroke-width="2.500"/><path d="M11 8h7M11 13h7M11 18h7" stroke="#aaa" stroke-width="2.500"/></svg><svg class="tri"><use href="#tri"/></svg></button>
    </div>
  </aside>
</div>

<footer class="status">
  <span class="msg">Introduzir primeiro vértice da área de seleção.</span>
  <svg class="wins" width="20" height="18"><path d="M4 5h15v12H4zM4 7h15M3 12H1V1h15v2M1 3h15" fill="none" stroke="#263238" stroke-width="1.500"/></svg>
  <a href="#" class="gsid"><b>GRAPHISOFT</b> ID</a>
</footer>
<div class="strip"></div>
</body>
</html>
```
FILE: styles.css
```css
* { box-sizing: border-box; }
body {
  margin: 0;
  min-height: 100vh;
  display: flex;
  flex-direction: column;
  background: #f0f0f0;
  color: #000;
  font: 12px/16px "Noto Sans", "Open Sans", sans-serif;
  overflow: hidden;
}
button { margin: 0; padding: 0; border: 0; background: none; font: inherit; color: inherit; display: flex; align-items: center; justify-content: center; }
h2, p, ul { margin: 0; padding: 0; font: inherit; }
svg { display: block; flex: none; }
.defs { position: absolute; width: 0; height: 0; }
.caret { width: 10px; height: 6px; }
.tri { width: 6px; height: 10px; }
.td { width: 10px; height: 6px; }
.on { background: #bfdcf2; border: 1px solid #90c8f6; }
.raised { background: #e1e1e1; border: 1px solid #adadad; }
.ico-text { font: 700 9px "Liberation Sans", sans-serif; }
.ico-dwg { font-weight: 400; }

.titlebar { height: 28px; background: #fff; display: flex; align-items: center; padding-left: 3px; }
.logo { width: 20px; height: 20px; }
.title { margin-left: 4px; font-size: 14px; flex: 1; }
.winctl { display: flex; margin-right: 3px; }
.winctl button { width: 58px; height: 28px; }
.menubar { height: 24px; background: #fff; display: flex; align-items: center; gap: 15px; padding: 3px 3px 0 8px; font-size: 14px; }
.menubar a { color: #000; text-decoration: none; }
.docctl { margin-left: auto; display: flex; gap: 3px; }

.toolbar { height: 42px; border-bottom: 1px solid #dcdcdc; display: flex; align-items: center; }
.sep { flex: none; width: 1px; height: 33px; background: #888; margin: 0 6px 0 3px; }
.sep.first { height: 21px; margin: 0 1px 0 4px; }
.sep.tight { margin: 0 4px 0 2px; }
.sep.loose { margin: 0 4px 0 10px; }
.tb { width: 30px; height: 36px; flex: none; }
.tb.wide { width: 34px; }
.lead { margin-left: 4px; }
.tb svg, .toggles button svg:not(.caret) { width: 22px; height: 22px; fill: none; stroke: #263238; stroke-width: 1.500; }
.tb svg .b, .toggles svg .b { stroke: #1e7bff; }
.tb svg .w { stroke-width: 3; }
.tb svg .f, .toggles svg .f { fill: #263238; }
.tb svg .bf { fill: #1e7bff; stroke: none; }
.tb.dim svg { stroke: #adadad; }
.tb.pale svg { stroke: #a9cbfa; }
.tb .num { font: 700 11px "Noto Sans", sans-serif; fill: #263238; stroke: none; }
.car { width: 22px; height: 36px; flex: none; }
.car.gray { width: 20px; color: #777; }
.toggles { display: flex; margin: 0 3px 0 1px; }
.toggles button { width: 37px; height: 36px; margin-right: -1px; }
.toggles .car { width: 20px; }

.infobox { height: 76px; border-bottom: 1px solid #dcdcdc; padding-top: 2px; }
.infobox p { padding-left: 12px; font-size: 11px; line-height: 16px; }
.inforow { display: flex; align-items: center; margin-top: 10px; padding-left: 5px; }
.inforow .sep { height: 31px; align-self: flex-start; margin: -5px 6px 0 0; }
.ib { width: 52px; height: 37px; flex: none; }
.ib svg:first-child { width: 24px; height: 20px; }
.ib svg.sm:first-child { width: 20px; height: 16px; }
.ib.raised { width: 50px; gap: 10px; margin-left: 2px; }
.ib.inset { width: 47px; height: 32px; margin-left: 9px; background: #f5f5f5; border: 1px solid; border-color: #a0a0a0 #fff #fff #a0a0a0; }

.work { flex: 1; display: flex; min-height: 0; }
.grip { display: block; height: 1px; background: #888; }
.toolbox { width: 118px; flex: none; display: flex; flex-direction: column; }
.toolbox .grip { width: 48px; margin: 5px 0 0 35px; }
.pick { display: flex; margin: 5px 0 8px 2px; }
.pick button { width: 53px; height: 35px; }
.pick .on { width: 55px; }
.toolbox h2, .navigator h2 { height: 25px; background: #d5d5d5; border-radius: 2px; display: flex; align-items: center; flex: none; white-space: nowrap; }
.toolbox h2 svg { margin: 0 8px 2px 8px; }
.toolbox h2 .tri { margin: 0 11px 2px 9px; }
.tools { display: grid; grid-template-columns: 54px 54px; grid-auto-rows: 38px; padding: 1px 0 5px 1px; }
.tools svg { width: 36px; height: 32px; fill: #fafafa; stroke: #263238; stroke-width: 4; stroke-linejoin: round; overflow: visible; }
.tools.small { grid-template-columns: 45px 45px; flex: 1; padding-bottom: 1px; }
.scroller { display: flex; justify-content: space-between; }
.vscroll { width: 12px; border-left: 1px solid #fff; display: flex; flex-direction: column; align-items: center; padding: 9px 0 8px; }
.vscroll i { width: 9px; height: 21px; background: #cdcdcd; margin: 8px 0 auto; }

.center { flex: 1; min-width: 0; display: flex; flex-direction: column; }
.tabs { height: 28px; background: #d9d9d9; display: flex; }
.overview { width: 32px; }
.tab { width: 375px; display: flex; align-items: center; padding: 0 11px 0 6px; font-size: 13px; border-right: 1px solid #c4c4c4; gap: 4px; }
.tab.active { background: #fff; border: 0; font-size: 12px; gap: 3px; }
.tab button { margin-left: auto; }
.navtab { margin-left: auto; width: 62px; background: #e9e9e9; gap: 1px; padding-left: 5px; }
.navtab .caret { margin-left: 6px; color: #444; }
.blue { color: #1e7bff; }
.canvas { flex: 1; position: relative; background: #fff; }
.dock { position: absolute; background: #f2f2f2 linear-gradient(90deg, #ffb070 70%, transparent 0) 4px 50% / 9px 2px repeat-x; width: 39px; height: 19px; border-radius: 4px; left: calc(50% - 20px); border: 0 solid #f2f2f2; border-width: 0 3px; background-origin: content-box; }
.dock.top { top: 1px; }
.dock.bottom { bottom: 4px; }
.dock.left, .dock.right { width: 19px; height: 39px; top: calc(50% - 21px); background: #f2f2f2 linear-gradient(#ffb070 70%, transparent 0) 50% 4px / 2px 9px repeat-y; border-width: 3px 0; }
.dock.left { left: 2px; }
.dock.right { left: auto; right: 2px; }
.frame { position: absolute; inset: 47px 358px 48px 305px; border: 1px solid #ffd9a8; }
.mk { position: absolute; width: 34px; height: 34px; fill: none; stroke: #2f9bff; stroke-width: 1.200; }
.mk .v { fill: #c4c0ff; stroke: none; }
.mk text { fill: #4b3ff0; stroke: none; font: 700 11px "Liberation Sans", sans-serif; text-anchor: middle; }
.mt { top: -17px; left: calc(50% - 17px); }
.mb { bottom: -17px; left: calc(50% - 17px); }
.ml { left: -17px; top: calc(50% - 17px); }
.mr { right: -17px; top: calc(50% - 17px); }
.origin { position: absolute; left: 76px; bottom: 75px; width: 10px; height: 10px; stroke: #222; stroke-width: 1.800; }

.dialog { position: absolute; left: 47px; top: 68px; width: 232px; border: 1px solid #6b6b6b; background: #f0f0f0; box-shadow: 0 4px 14px rgba(0, 0, 0, .35); padding-bottom: 3px; font-size: 12px; }
.dialog hr { border: 0; border-top: 1px solid #a0a0a0; margin: 0 1px 0 0; }
.dhead { height: 37px; background: #fff; display: flex; align-items: center; justify-content: space-between; padding: 0 14px 0 9px; font-size: 14px; }
.select { position: relative; margin: 3px 2px 0 3px; }
.select svg { position: absolute; right: 5px; top: 12px; pointer-events: none; }
.select select { display: block; width: 100%; height: 29px; appearance: none; border: 1px solid #7a7a7a; border-radius: 0; background: #fff; font: inherit; color: #000; padding: 1px 6px 0; }
.shapes { display: grid; grid-template-columns: repeat(4, 56px); margin: 2px 0 0 3px; }
.shapes button { height: 43px; }
.shapes svg { width: 56px; height: 43px; fill: none; stroke: #263238; stroke-width: 4; margin: -1px; }
.size { display: flex; justify-content: space-between; margin: 7px 3px 6px 24px; }
.diam { width: 30px; height: 50px; margin-top: 4px; fill: none; stroke: #263238; stroke-width: 3; }
.fields { display: flex; flex-direction: column; gap: 2px; }
.fields div { display: flex; gap: 7px; align-items: center; }
.dialog input:not([type]) { width: 88px; height: 29px; border: 1px solid #7a7a7a; background: #fff; font: inherit; color: #000; padding: 1px 3px 0; border-radius: 0; }
.dialog .off input:not([type]) { border-color: #ccc; background: #f0f0f0; color: #777; }
.mini { width: 17px; height: 17px; background: #e1e1e1; border: 1px solid #adadad; }
.off .mini { background: #ccc; border-color: #bbb; }
.off .mini svg { opacity: .4; }
.lbl { display: block; padding-left: 3px; }
.method { margin-top: 9px; }
.dirs { display: grid; grid-template-columns: repeat(4, 56px); margin: 5px 0 0 3px; }
.dirs button { height: 30px; }
.dirs svg:first-child { width: 28px; height: 28px; fill: none; stroke: #b0b0b0; stroke-width: 1.600; }
.dirs .last { justify-content: flex-start; padding-left: 11px; gap: 7px; }
.dirs .tri { opacity: .45; }
.cota { display: flex; justify-content: space-between; align-items: center; margin: 8px 3px 0; }
.anchor { display: flex; justify-content: space-between; margin: 4px 2px 9px 21px; }
.anchorgrid { position: relative; display: grid; grid-template-columns: repeat(3, 23px); grid-auto-rows: 23px; height: 69px; }
.anchorgrid input { appearance: none; margin: 0; width: 23px; height: 23px; }
.anchorgrid input:checked { background: #bfdcf2; border: 1px solid #90c8f6; }
.anchorgrid svg { position: absolute; inset: 0; width: 69px; height: 69px; pointer-events: none; }
.elev { display: flex; flex-direction: column; padding-top: 8px; gap: 10px; }
.elev svg { width: 40px; height: 18px; margin-left: 37px; }
.dialog .elev input { width: 113px; }
.sys { margin-top: 11px; line-height: 16px; padding-bottom: 2px; }
.push { width: calc(100% - 7px); margin: 4px 3px 0 4px; background: #e1e1e1; border: 1px solid #adadad; }
.opts { height: 27px; padding-top: 1px; }
.layer { height: 36px; justify-content: flex-start; padding: 0 4px 0 10px; gap: 6px; margin-bottom: 7px; }
.layer span { flex: 1; text-align: left; }
.start { height: 36px; margin-top: 7px; font-weight: 700; }

.quick { height: 24px; display: flex; flex: none; }
.quick svg:not(.tri) { width: 22px; height: 22px; fill: none; stroke: #263238; stroke-width: 1.500; }
.zoomers { width: 89px; display: flex; align-items: center; gap: 7px; padding-left: 3px; }
.quick .dimi { opacity: .4; }
.quick button { width: 150px; border-left: 1px solid #a0a0a0; padding: 0 7px; }
.quick span { flex: 1; text-align: center; white-space: nowrap; padding-left: 4px; }

.navigator { width: 226px; flex: none; border-left: 1px solid #d5d5d5; display: flex; flex-direction: column; }
.navigator .grip { width: 87px; margin: 5px 0 0 69px; }
.navmodes { display: flex; margin: 6px 0 0 4px; align-items: center; color: #263238; }
.navmodes button { width: 37px; height: 37px; }
.navmodes .raised { width: 54px; gap: 14px; margin-right: 17px; height: 36px; padding-left: 8px; }
.navmodes .on { margin-left: auto; }
.navset { display: flex; gap: 2px; margin: 4px 0 3px 4px; }
.navset .wide { width: 193px; height: 27px; padding: 1px 4px 0 21px; justify-content: space-between; }
.navset .up { flex: 1; border-right: 0; }
.tree { height: 474px; padding-top: 1px; background: #fff; list-style: none; margin-right: 1px; flex: none; }
.tree li { height: 28px; display: flex; align-items: center; white-space: nowrap; }
.cd { width: 12px; height: 10px; margin-right: 6px; }
.ti { width: 24px; height: 24px; margin-right: 5px; }
.l0 { padding-left: 7px; }
.l1 { padding-left: 20px; }
.l2 { padding-left: 33px; }
.l3 { padding-left: 46px; }
.treebar { height: 42px; display: flex; justify-content: flex-end; align-items: center; gap: 18px; padding-right: 13px; flex: none; }
.navigator h2 { height: 28px; margin: 0 4px 0 3px; padding-top: 1px; }
.navigator h2 svg { margin: 0 11px 2px 9px; }
.navigator h2 .tri { margin: 0 13px 2px 11px; }
.empty { text-align: center; padding: 7px 3px 0 0; flex: 1; }
.publish { border-top: 1px solid #a0a0a0; margin: 2px 4px 3px 0; padding: 5px 0 0 2px; display: flex; gap: 6px; height: 34px; }
.publish .wide { flex: 1; height: 27px; padding-top: 1px; }
.scope { width: 42px; height: 27px; gap: 10px; }

.status { height: 28px; border-top: 1px solid #d0d0d0; display: flex; align-items: center; padding: 0 29px 0 2px; }
.msg { flex: 1; font-size: 14px; }
.wins { margin-right: 6px; }
.gsid { width: 164px; height: 26px; border: 0 solid #d0d0d0; border-width: 0 1px; text-align: center; color: #263238; text-decoration: none; font: 16px/26px Lato, sans-serif; }
.strip { height: 2px; background: linear-gradient(90deg, #dfe6c0 0 110px, #ddd 110px 490px, #e4e8b0 490px 60%, #e8dfbf); }
```
